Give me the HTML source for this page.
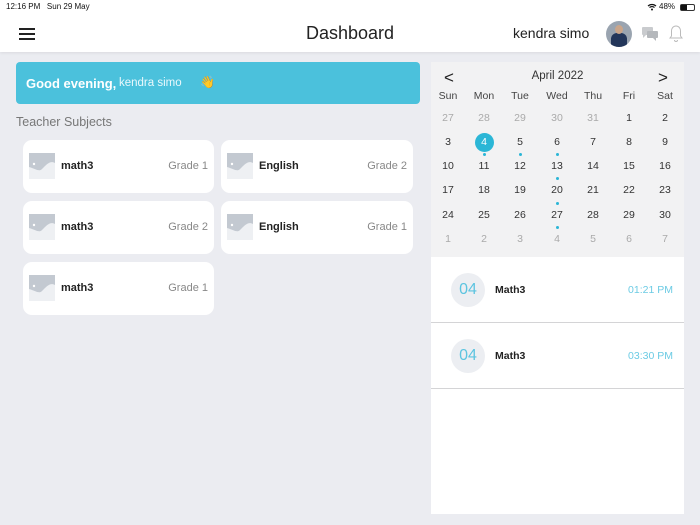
<!DOCTYPE html>
<html><head><meta charset="utf-8"><style>
*{margin:0;padding:0;box-sizing:border-box}
body{width:700px;height:525px;background:#ebecf1;font-family:"Liberation Sans",sans-serif;position:relative;overflow:hidden;color:#222}
.abs{position:absolute}
.card{position:absolute;width:191px;height:53px;background:#fff;border-radius:9px}
.card .img{position:absolute;left:6px;top:13px;width:26px;height:26px;background:#eef0f3;overflow:hidden}
.card .nm{position:absolute;left:38px;top:20px;font-size:11px;font-weight:bold;color:#222}
.card .gr{position:absolute;right:6px;top:20px;font-size:11px;color:#888}
.cal{left:431px;top:62px;width:253px;height:195px;background:#f2f2f3}
.d{position:absolute;width:30px;margin-left:-15px;text-align:center;font-size:10.5px;color:#333}
.g{color:#aaa}
.dot{position:absolute;width:3px;height:3px;border-radius:50%;background:#2bb6d6;margin-left:-1.5px}
</style></head><body>
<div class="abs" style="left:0;top:0;width:700px;height:52px;background:#fff;box-shadow:0 1px 3px rgba(0,0,0,.08)"></div>
<div class="abs" style="left:6px;top:2px;font-size:8px;color:#111">12:16 PM&nbsp;&nbsp; Sun 29 May</div>
<div class="abs" style="left:659px;top:2px;font-size:8px;color:#111">48%</div>
<div class="abs" style="left:680px;top:4px;width:15px;height:7px;border:1px solid #333;border-radius:2px"><div style="width:6px;height:5px;background:#111"></div></div>
<svg class="abs" style="left:647px;top:3px" width="10" height="8" viewBox="0 0 10 8"><path d="M1 3a6 6 0 0 1 8 0M2.5 4.5a4 4 0 0 1 5 0" stroke="#111" fill="none" stroke-width="1.2"/><circle cx="5" cy="6.5" r="1" fill="#111"/></svg>
<div class="abs" style="left:19px;top:28px;width:16px;height:2px;background:#222;box-shadow:0 5px 0 #222,0 10px 0 #222"></div>
<div class="abs" style="left:0;width:700px;top:23px;text-align:center;font-size:18px;color:#222">Dashboard</div>
<div class="abs" style="left:513px;top:25px;font-size:14px;color:#222">kendra simo</div>
<div class="abs" style="left:606px;top:21px;width:26px;height:26px;border-radius:50%;background:#9aa4b0;overflow:hidden"><div style="position:absolute;left:5px;top:12px;width:16px;height:16px;border-radius:6px 6px 0 0;background:#23365a"></div><div style="position:absolute;left:9px;top:4px;width:8px;height:9px;border-radius:50%;background:#caa58a"></div></div>
<svg class="abs" style="left:641px;top:26px" width="18" height="16" viewBox="0 0 18 16"><rect x="1" y="1" width="11" height="8" rx="1" fill="#c9cbce"/><path d="M2 9v3l3-3" fill="#c9cbce"/><rect x="6" y="5" width="11" height="7" rx="1" fill="#b5b8bc"/><path d="M15 12v3l-3-3" fill="#b5b8bc"/></svg>
<svg class="abs" style="left:668px;top:24px" width="16" height="19" viewBox="0 0 16 19"><path d="M8 2c-3 0-4.5 2.5-4.5 5v5L2 14h12l-1.5-2V7c0-2.5-1.5-5-4.5-5zM6.5 16a1.5 1.5 0 0 0 3 0" stroke="#bbb" fill="none" stroke-width="1"/></svg>
<div class="abs" style="left:16px;top:62px;width:404px;height:42px;background:#4bc1dc;border-radius:4px"></div>
<div class="abs" style="left:26px;top:76px;font-size:13px;font-weight:bold;color:#fff">Good evening,</div>
<div class="abs" style="left:119px;top:77px;font-size:11.5px;color:#eaf8fc">kendra simo</div>
<div class="abs" style="left:200px;top:75px;font-size:12px">👋</div>
<div class="abs" style="left:16px;top:115px;font-size:12.5px;color:#777">Teacher Subjects</div>
<div class="card" style="left:23px;top:140px"><div class="img"><svg width="26" height="26"><path d="M0 0h26v10c-5-3-9 2-13 6c-3 3-6 0-13-2z" fill="#c3c9d1"/><circle cx="5" cy="11" r="1.2" fill="#fff"/></svg></div><div class="nm">math3</div><div class="gr">Grade 1</div></div>
<div class="card" style="left:221px;top:140px;width:192px"><div class="img"><svg width="26" height="26"><path d="M0 0h26v10c-5-3-9 2-13 6c-3 3-6 0-13-2z" fill="#c3c9d1"/><circle cx="5" cy="11" r="1.2" fill="#fff"/></svg></div><div class="nm">English</div><div class="gr">Grade 2</div></div>
<div class="card" style="left:23px;top:201px"><div class="img"><svg width="26" height="26"><path d="M0 0h26v10c-5-3-9 2-13 6c-3 3-6 0-13-2z" fill="#c3c9d1"/><circle cx="5" cy="11" r="1.2" fill="#fff"/></svg></div><div class="nm">math3</div><div class="gr">Grade 2</div></div>
<div class="card" style="left:221px;top:201px;width:192px"><div class="img"><svg width="26" height="26"><path d="M0 0h26v10c-5-3-9 2-13 6c-3 3-6 0-13-2z" fill="#c3c9d1"/><circle cx="5" cy="11" r="1.2" fill="#fff"/></svg></div><div class="nm">English</div><div class="gr">Grade 1</div></div>
<div class="card" style="left:23px;top:262px"><div class="img"><svg width="26" height="26"><path d="M0 0h26v10c-5-3-9 2-13 6c-3 3-6 0-13-2z" fill="#c3c9d1"/><circle cx="5" cy="11" r="1.2" fill="#fff"/></svg></div><div class="nm">math3</div><div class="gr">Grade 1</div></div>
<div class="abs cal"></div>
<div class="abs" style="left:444px;top:68px;font-size:17px;color:#222">&lt;</div>
<div class="abs" style="left:658px;top:68px;font-size:17px;color:#222">&gt;</div>
<div class="abs" style="left:431px;width:253px;top:70px;text-align:center;font-size:11.5px;color:#333">April 2022</div>
<div id="c"></div>
<div class="abs" style="left:431px;top:257px;width:253px;height:257px;background:#fff"></div>
<div class="abs" style="left:431px;top:322px;width:253px;height:1px;background:#d4d4d6"></div>
<div class="abs" style="left:431px;top:388px;width:253px;height:1px;background:#d4d4d6"></div>
<div class="abs" style="left:451px;top:273px;width:34px;height:34px;border-radius:50%;background:#eceef2;text-align:center;line-height:34px;font-size:16px;color:#5cc4e0">04</div>
<div class="abs" style="left:451px;top:339px;width:34px;height:34px;border-radius:50%;background:#eceef2;text-align:center;line-height:34px;font-size:16px;color:#5cc4e0">04</div>
<div class="abs" style="left:495px;top:284px;font-size:10.5px;font-weight:bold;color:#222">Math3</div>
<div class="abs" style="left:495px;top:350px;font-size:10.5px;font-weight:bold;color:#222">Math3</div>
<div class="abs" style="right:27px;top:284px;font-size:10.5px;color:#6ccbe4">01:21 PM</div>
<div class="abs" style="right:27px;top:350px;font-size:10.5px;color:#6ccbe4">03:30 PM</div>
<div class="abs" style="left:475px;top:133px;width:19px;height:19px;border-radius:50%;background:#2bb6d6"></div>
<script>
var xs=[448,484,520,557,593,629,665],h=["Sun","Mon","Tue","Wed","Thu","Fri","Sat"],s="";
h.forEach(function(t,i){s+='<div class="d" style="left:'+xs[i]+'px;top:90px;font-size:10.5px;color:#444">'+t+'</div>'});
var days=[27,28,29,30,31,1,2];for(var i=3;i<=30;i++)days.push(i);for(i=1;i<=7;i++)days.push(i);
var ys=[112,136,160,184,209,233];
days.forEach(function(d,k){var r=Math.floor(k/7),c=k%7,g=(r==0&&c<5)||r==5;
s+='<div class="d'+(g?' g':'')+'" style="left:'+xs[c]+'px;top:'+ys[r]+'px;'+(r==1&&c==1?'color:#fff;z-index:2':'')+'">'+d+'</div>';});
[[484,153],[520,153],[557,153],[557,177],[557,202],[557,226]].forEach(function(p){s+='<div class="dot" style="left:'+p[0]+'px;top:'+p[1]+'px"></div>'});
document.getElementById("c").outerHTML=s;
</script>
</body></html>
